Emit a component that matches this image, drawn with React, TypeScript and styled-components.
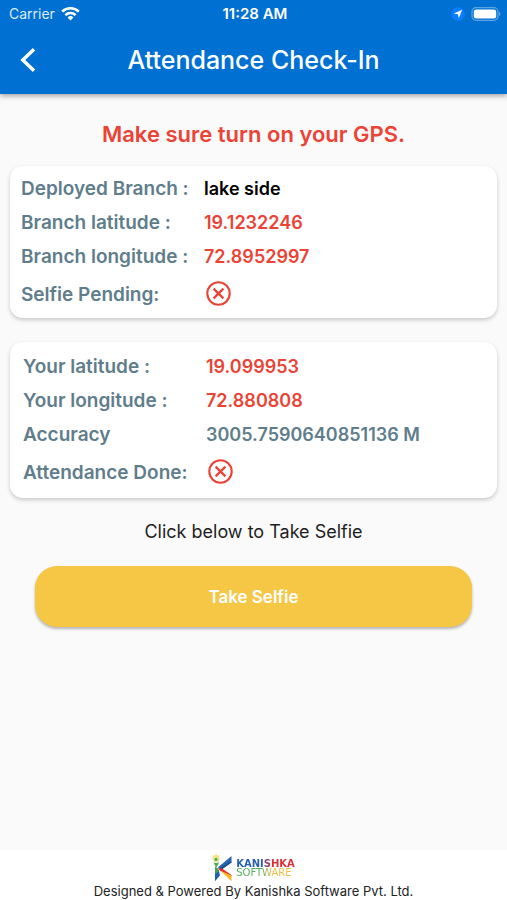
import React from "react";
import styled, { createGlobalStyle } from "styled-components";

const GlobalStyle = createGlobalStyle`
  *, *::before, *::after { box-sizing: border-box; }
  body {
    margin: 0;
    background: #fafafa;
    font-family: Inter, "Liberation Sans", sans-serif;
  }
`;

const Screen = styled.div`
  display: flex;
  flex-direction: column;
  min-height: 100vh;
`;

const Header = styled.header`
  background: #0071d3;
  color: #fff;
  box-shadow: 0 2px 5px rgba(0, 0, 0, 0.35);
`;

const StatusBar = styled.div`
  display: grid;
  grid-template-columns: 1fr auto 1fr;
  align-items: center;
  height: 27px;
  padding: 0 6px 0 9px;
  font-size: 14px;
`;

const StatusGroup = styled.div<{ $end?: boolean }>`
  display: flex;
  align-items: center;
  justify-content: ${(p) => (p.$end ? "flex-end" : "flex-start")};
  gap: 6px;
  color: #dcecfb;
`;

const Clock = styled.time`
  font-size: 15px;
  font-weight: 600;
`;

const TitleBar = styled.div`
  display: grid;
  grid-template-columns: 56px 1fr 56px;
  align-items: center;
  height: 67px;
  padding-bottom: 2px;
`;

const BackButton = styled.button`
  display: flex;
  align-items: center;
  justify-content: center;
  height: 48px;
  padding: 0;
  border: 0;
  background: none;
  color: inherit;
  cursor: pointer;
`;

const Title = styled.h1`
  margin: 0;
  font-size: 25px;
  font-weight: 500;
  line-height: 32px;
  text-align: center;
  white-space: nowrap;
`;

const Content = styled.main`
  display: flex;
  flex: 1;
  flex-direction: column;
  padding: 24px 10px;
`;

const Notice = styled.p`
  margin: 0 0 16px;
  color: #eb4336;
  font-size: 22px;
  font-weight: 600;
  line-height: 32px;
  text-align: center;
`;

const Card = styled.dl<{ $inset: number; $block: number }>`
  margin: 0 0 24px;
  padding: ${(p) => p.$block}px ${(p) => p.$inset}px ${(p) => p.$block - 2}px;
  border-radius: 13px;
  background: #fff;
  box-shadow: 0 2px 4px rgba(0, 0, 0, 0.2);
`;

const Row = styled.div<{ $tall?: boolean }>`
  display: grid;
  grid-template-columns: 183px 1fr;
  align-items: center;
  height: ${(p) => (p.$tall ? 42 : 34)}px;
  font-size: 18px;
  font-weight: 600;
`;

const Label = styled.dt`
  color: #607d8b;
  font-size: 19px;
  white-space: nowrap;
`;

const tones = { red: "#eb4336", black: "#000", slate: "#607d8b" };

const Value = styled.dd<{ $tone: keyof typeof tones }>`
  display: flex;
  margin: 0;
  color: ${(p) => tones[p.$tone]};
`;

const Prompt = styled.p`
  margin: 0 0 24px;
  color: #1e1e1e;
  font-size: 18px;
  line-height: 20px;
  text-align: center;
`;

const SelfieButton = styled.button`
  height: 61px;
  margin: 0 25px;
  border: 0;
  border-radius: 22px;
  background: #f6c744;
  box-shadow: 0 2px 3px rgba(0, 0, 0, 0.28);
  color: #fff;
  font-family: inherit;
  font-size: 17px;
  font-weight: 600;
  cursor: pointer;
`;

const Footer = styled.footer`
  display: flex;
  flex-direction: column;
  align-items: center;
  height: 50px;
  padding-top: 3px;
  background: #fff;
  color: #222;
`;

const Brand = styled.div`
  display: flex;
  align-items: center;
  gap: 4px;
  height: 29px;
`;

const BrandName = styled.div`
  display: flex;
  flex-direction: column;
  font-family: "DejaVu Sans", sans-serif;
  font-size: 10px;
  line-height: 9px;
`;

const BrandWord = styled.span<{ $from: string; $to: string; $heavy?: boolean }>`
  background: linear-gradient(90deg, ${(p) => p.$from} 42%, ${(p) => p.$to} 62%);
  background-clip: text;
  -webkit-background-clip: text;
  color: transparent;
  font-weight: ${(p) => (p.$heavy ? 700 : 400)};
`;

const Credit = styled.small`
  font-size: 13px;
  line-height: 18px;
`;

const CrossCircle = ({ label }: { label: string }) => (
  <svg width="30" height="30" viewBox="0 0 30 30" fill="none" stroke="currentColor" role="img" aria-label={label}>
    <circle cx="14.5" cy="14.5" r="11.2" strokeWidth="2.1" />
    <path d="M9.6 9.6l9.8 9.8M19.4 9.6l-9.8 9.8" strokeWidth="2.2" />
  </svg>
);

const Wifi = () => (
  <svg width="19" height="15" viewBox="0 0 19 15" fill="none" stroke="#fff" strokeWidth="2.7" aria-hidden="true">
    <path d="M1.2 5.6a12 12 0 0 1 16.6 0" />
    <path d="M4.4 9.1a7.3 7.3 0 0 1 10.2 0" />
    <path d="M9.5 14.4L6.6 11.5a4.2 4.2 0 0 1 5.8 0z" fill="#fff" stroke="none" />
  </svg>
);

const LocationBadge = () => (
  <svg width="14" height="14" viewBox="0 0 14 14" aria-hidden="true">
    <circle cx="7" cy="7" r="6.8" fill="#087dff" />
    <path d="M11.2 2.8L7.8 11.3 6.9 7.3 2.8 6.6z" fill="#fff" />
  </svg>
);

const Battery = () => (
  <svg width="30" height="14" viewBox="0 0 30 14" aria-hidden="true">
    <rect x="1" y="0.7" width="26" height="12.6" rx="4" fill="none" stroke="#5ca4e4" strokeWidth="1.2" />
    <rect x="2.8" y="2.5" width="22.4" height="9" rx="2.3" fill="#fff" />
    <path d="M28.2 4.8c1.7.5 1.7 3.9 0 4.4z" fill="#5ca4e4" />
  </svg>
);

const BackChevron = () => (
  <svg width="24" height="28" viewBox="0 0 24 28" fill="none" stroke="currentColor" strokeWidth="3.4" aria-hidden="true">
    <path d="M18 3.2L6.8 14 18 24.8" />
  </svg>
);

const BrandMark = () => (
  <svg width="20" height="28" viewBox="0 0 20 28" aria-hidden="true">
    <circle cx="4" cy="4.5" r="3.4" fill="#f9e48e" />
    <path d="M4 0v1M.3 1.5l1 1M7.7 1.5l-1 1" stroke="#e9c94c" strokeWidth=".8" />
    <circle cx="4" cy="5.4" r="1.6" fill="#56ad53" />
    <path d="M.7 6.2c.6 2 1.8 2.9 3.3 2.9s2.8-.9 3.4-2.9L6.2 10.5 4 14z" fill="#54ad56" />
    <path d="M5.8 13.6L19.5 2v6.4L9.8 15z" fill="#2864ae" />
    <path d="M7 14.8L19.5 7.2v1.2L9.8 15.6z" fill="#18498d" />
    <path d="M5.4 14.3l4.6.2 9.5 6.6v1.2L8.4 17z" fill="#df2e2d" />
    <path d="M8.4 16.8l11.1 4.7v5.7z" fill="#f5b62a" />
    <path d="M3 16v11.2l5-5.8L6.7 16z" fill="#245da8" />
    <path d="M3 12.8v7.4l4-3.2-1.4-3z" fill="#40a55b" />
  </svg>
);

type Entry = { label: string; value?: string; tone?: keyof typeof tones };

const branchDetails: Entry[] = [
  { label: "Deployed Branch :", value: "lake side", tone: "black" },
  { label: "Branch latitude :", value: "19.1232246" },
  { label: "Branch longitude :", value: "72.8952997" },
  { label: "Selfie Pending:" },
];

const userDetails: Entry[] = [
  { label: "Your latitude :", value: "19.099953" },
  { label: "Your longitude :", value: "72.880808" },
  { label: "Accuracy", value: "3005.7590640851136 M", tone: "slate" },
  { label: "Attendance Done:" },
];

const DetailRows = ({ entries }: { entries: Entry[] }) => (
  <>
    {entries.map(({ label, value, tone = "red" }) => (
      <Row key={label} $tall={!value}>
        <Label>{label}</Label>
        <Value $tone={tone}>{value ?? <CrossCircle label="No" />}</Value>
      </Row>
    ))}
  </>
);

export default function App() {
  return (
    <Screen>
      <GlobalStyle />
      <Header>
        <StatusBar>
          <StatusGroup>
            <span>Carrier</span>
            <Wifi />
          </StatusGroup>
          <Clock>11:28 AM</Clock>
          <StatusGroup $end>
            <LocationBadge />
            <Battery />
          </StatusGroup>
        </StatusBar>
        <TitleBar>
          <BackButton type="button" aria-label="Back">
            <BackChevron />
          </BackButton>
          <Title>Attendance Check-In</Title>
        </TitleBar>
      </Header>
      <Content>
        <Notice>Make sure turn on your GPS.</Notice>
        <Card $inset={11} $block={5}>
          <DetailRows entries={branchDetails} />
        </Card>
        <Card $inset={13} $block={7}>
          <DetailRows entries={userDetails} />
        </Card>
        <Prompt>Click below to Take Selfie</Prompt>
        <SelfieButton type="button">Take Selfie</SelfieButton>
      </Content>
      <Footer>
        <Brand>
          <BrandMark />
          <BrandName>
            <BrandWord $from="#245da8" $to="#dc2e37" $heavy>KANISHKA</BrandWord>
            <BrandWord $from="#4fae57" $to="#efbd3d">SOFTWARE</BrandWord>
          </BrandName>
        </Brand>
        <Credit>Designed &amp; Powered By Kanishka Software Pvt. Ltd.</Credit>
      </Footer>
    </Screen>
  );
}
